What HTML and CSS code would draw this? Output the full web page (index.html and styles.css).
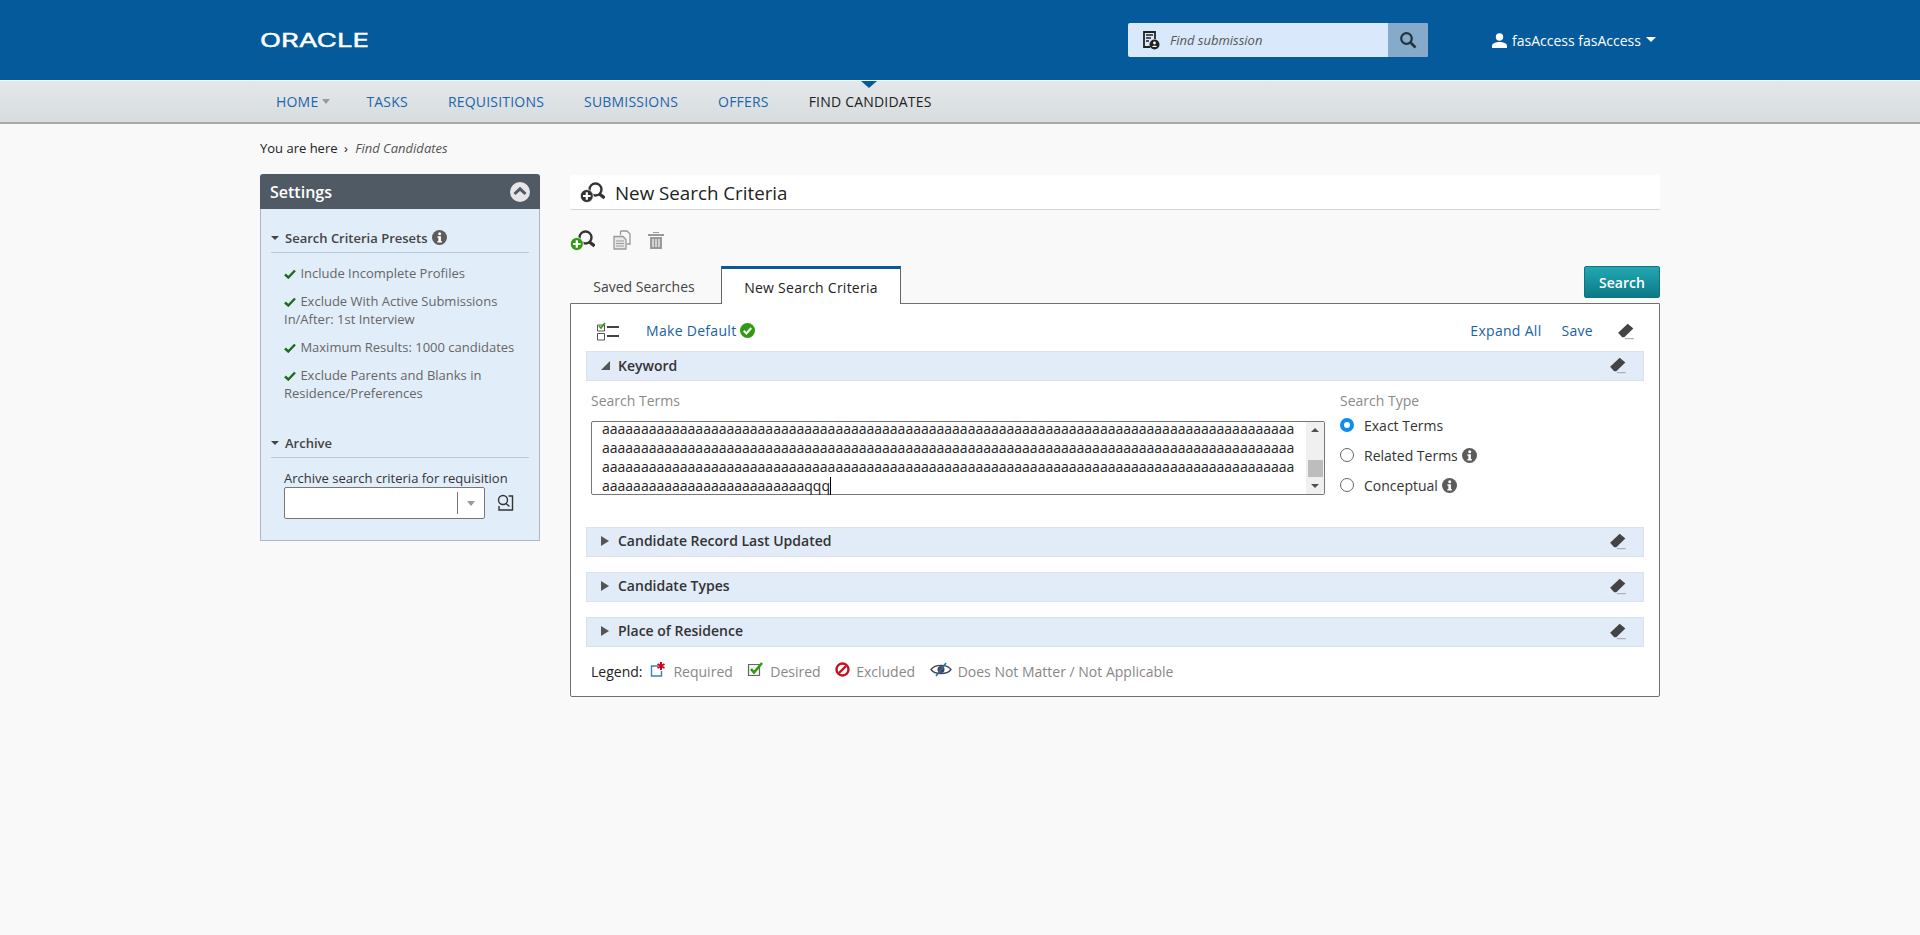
FILE: index.html
```html
<!DOCTYPE html>
<html lang="en">
<head>
    <meta charset="UTF-8">
    <meta name="viewport" content="width=device-width, initial-scale=1.0">
    <title>Find Candidates</title>
    <link rel="stylesheet" href="styles.css">
</head>
<body>
    <svg class="defs" width="0" height="0">
        <defs>
            <symbol id="eraser" viewBox="0 0 16 16">
                <path d="M1 9.500 9.500 1.500l5 4.200L6.500 13.500H4.600z" fill="#444"/>
                <path d="M7 14.800h8" stroke="#aaa" stroke-width="1"/>
            </symbol>
            <symbol id="info" viewBox="0 0 16 16">
                <circle cx="8" cy="8" r="8" fill="#5c5c5c"/>
                <circle cx="8.200" cy="3.900" r="1.600" fill="#fff"/>
                <path d="M5.800 6.700h3.700v5.100h1v1.500H5.800v-1.500h1v-3.600h-1z" fill="#fff"/>
            </symbol>
            <symbol id="check" viewBox="0 0 12 10">
                <path d="M1 5.500 4.300 8.500 11 1.500" fill="none" stroke="#1d6b1d" stroke-width="2.400"/>
            </symbol>
        </defs>
    </svg>

    <header class="topbar">
        <div class="wrap topbar-inner">
            <svg class="logo" width="110" height="28" viewBox="0 0 110 28">
                <text x="0" y="21" textLength="109" lengthAdjust="spacingAndGlyphs" font-family="Inter" font-size="18" fill="#fff" stroke="#fff" stroke-width="0.400">ORACLE</text>
            </svg>
            <div class="find-box">
                <svg class="find-icon" width="18" height="20" viewBox="0 0 18 20">
                    <path d="M8 17H2V2h11v7" fill="none" stroke="#222" stroke-width="1.800"/>
                    <path d="M4 5h7M4 8h5M4 11h3" stroke="#222" stroke-width="1.500"/>
                    <circle cx="12.500" cy="14.500" r="5" fill="#222"/>
                    <circle cx="12.500" cy="13" r="1.400" fill="#fff"/>
                    <path d="M10 17c.5-1.800 4.500-1.800 5 0z" fill="#fff"/>
                </svg>
                <span class="find-text">Find submission</span>
                <span class="find-btn">
                    <svg width="18" height="18" viewBox="0 0 18 18">
                        <circle cx="7.500" cy="7.500" r="5.300" fill="none" stroke="#24323e" stroke-width="2.200"/>
                        <path d="M11.500 11.500l5 5" stroke="#24323e" stroke-width="2.600"/>
                    </svg>
                </span>
            </div>
            <div class="user">
                <svg width="15" height="15" viewBox="0 0 15 15">
                    <circle cx="7.500" cy="4" r="3.700" fill="#fff"/>
                    <path d="M0 15v-2c0-3 4-4 7.500-4s7.500 1 7.500 4v2z" fill="#fff"/>
                </svg>
                <span>fasAccess fasAccess</span>
                <i class="caret-white"></i>
            </div>
        </div>
    </header>

    <nav class="navbar">
        <div class="wrap nav-inner">
            <a class="nav-link">HOME<i class="caret-gray"></i></a>
            <a class="nav-link">TASKS</a>
            <a class="nav-link">REQUISITIONS</a>
            <a class="nav-link">SUBMISSIONS</a>
            <a class="nav-link">OFFERS</a>
            <a class="nav-link current">FIND CANDIDATES</a>
        </div>
    </nav>

    <div class="wrap">
        <div class="crumbs">You are here <span class="crumb-sep">›</span> <em>Find Candidates</em></div>

        <div class="columns">
            <aside class="sidebar">
                <div class="side-head">
                    <span>Settings</span>
                    <svg width="20" height="20" viewBox="0 0 20 20">
                        <circle cx="10" cy="10" r="10" fill="#e6e6e6"/>
                        <path d="M4.500 12 10 6.800 15.500 12" fill="none" stroke="#4f5a65" stroke-width="3"/>
                    </svg>
                </div>
                <div class="side-body">
                    <div class="side-title"><i class="caret-small"></i>Search Criteria Presets <svg class="info" width="15" height="15"><use href="#info"/></svg></div>
                    <ul class="presets">
                        <li><svg class="tick" width="12" height="10"><use href="#check"/></svg> Include Incomplete Profiles</li>
                        <li><svg class="tick" width="12" height="10"><use href="#check"/></svg> Exclude With Active Submissions In/After: 1st Interview</li>
                        <li><svg class="tick" width="12" height="10"><use href="#check"/></svg> Maximum Results: 1000 candidates</li>
                        <li><svg class="tick" width="12" height="10"><use href="#check"/></svg> Exclude Parents and Blanks in Residence/Preferences</li>
                    </ul>
                    <div class="side-title archive-title"><i class="caret-small"></i>Archive</div>
                    <div class="archive-label">Archive search criteria for requisition</div>
                    <div class="archive-row">
                        <div class="combo"><span class="combo-arrow"><i class="caret-gray"></i></span></div>
                        <svg width="18" height="18" viewBox="0 0 18 18">
                            <circle cx="7" cy="6" r="4.500" fill="none" stroke="#333" stroke-width="1.400"/>
                            <path d="M10 9.500l3.500 3M12.500 2H16.500V16H3V12" fill="none" stroke="#333" stroke-width="1.400"/>
                        </svg>
                    </div>
                </div>
            </aside>

            <main class="content">
                <div class="title-bar">
                    <svg width="25" height="21" viewBox="0 0 25 21">
                        <circle cx="15.500" cy="7.500" r="6" fill="none" stroke="#333" stroke-width="2.400"/>
                        <path d="M19.500 12l5 4" stroke="#333" stroke-width="3.400"/>
                        <circle cx="6.800" cy="14" r="6.500" fill="#333" stroke="#fff" stroke-width="0.800"/>
                        <path d="M3 14h7.600M6.800 10.200v7.600" stroke="#fff" stroke-width="2.200"/>
                    </svg>
                    <h1>New Search Criteria</h1>
                </div>

                <div class="tools">
                    <svg width="25" height="21" viewBox="0 0 25 21">
                        <circle cx="15.500" cy="7.500" r="6" fill="none" stroke="#333" stroke-width="2.400"/>
                        <path d="M19.500 12l5 4" stroke="#333" stroke-width="3.400"/>
                        <circle cx="6.800" cy="14" r="6.500" fill="#2f9a12" stroke="#fff" stroke-width="0.800"/>
                        <path d="M3 14h7.600M6.800 10.200v7.600" stroke="#fff" stroke-width="2.200"/>
                    </svg>
                    <svg class="tool-copy" width="18" height="20" viewBox="0 0 18 20">
                        <path d="M7.500 1H14l3 3v10h-3M7.500 1v4" fill="none" stroke="#999" stroke-width="1.300"/>
                        <path d="M1 6.500h9l3 3v9.500H1z" fill="#e8e8e8" stroke="#999" stroke-width="1.300"/>
                        <path d="M3 11h8M3 13.500h8M3 16h8" stroke="#999" stroke-width="1.200"/>
                    </svg>
                    <svg class="tool-trash" width="16" height="18" viewBox="0 0 16 18">
                        <path d="M5 2V1h6v1M0 3h16v2H0zM2 6h12v12H2z" fill="#999"/>
                        <path d="M5 8v8M8 8v8M11 8v8" stroke="#e8e8e8" stroke-width="1.400"/>
                    </svg>
                </div>

                <div class="tab-row">
                    <a class="tab">Saved Searches</a>
                    <a class="tab active">New Search Criteria</a>
                    <a class="search-btn">Search</a>
                </div>

                <section class="panel">
                    <div class="panel-top">
                        <svg class="list-icon" width="24" height="20" viewBox="0 0 24 20">
                            <path d="M1.500 4h7v6h-7zM1.500 12.500h7v6.500h-7z" fill="none" stroke="#555"/>
                            <path d="M3 5l2 2 4-5" fill="none" stroke="#2f9a12" stroke-width="1.600"/>
                            <path d="M11 6h12M11 15h12" stroke="#444" stroke-width="2"/>
                        </svg>
                        <a class="link">Make Default</a>
                        <svg class="ok-icon" width="15" height="15" viewBox="0 0 14 14">
                            <circle cx="7" cy="7" r="7" fill="#2f9a12"/>
                            <path d="M3.500 7.200 6 9.700l4.500-5" fill="none" stroke="#fff" stroke-width="2"/>
                        </svg>
                        <span class="spacer"></span>
                        <a class="link">Expand All</a>
                        <a class="link save-link">Save</a>
                        <svg class="top-eraser" width="18" height="18"><use href="#eraser"/></svg>
                    </div>

                    <div class="section-head"><i class="tri-open"></i><span>Keyword</span><svg width="18" height="18"><use href="#eraser"/></svg></div>
                    <div class="keyword">
                        <div class="terms">
                            <div class="field-label">Search Terms</div>
                            <div class="textbox">
                                <div class="textbox-text">
                                    <div>aaaaaaaaaaaaaaaaaaaaaaaaaaaaaaaaaaaaaaaaaaaaaaaaaaaaaaaaaaaaaaaaaaaaaaaaaaaaaaaaaaaaaaaaa</div>
                                    <div>aaaaaaaaaaaaaaaaaaaaaaaaaaaaaaaaaaaaaaaaaaaaaaaaaaaaaaaaaaaaaaaaaaaaaaaaaaaaaaaaaaaaaaaaa</div>
                                    <div>aaaaaaaaaaaaaaaaaaaaaaaaaaaaaaaaaaaaaaaaaaaaaaaaaaaaaaaaaaaaaaaaaaaaaaaaaaaaaaaaaaaaaaaaa</div>
                                    <div>aaaaaaaaaaaaaaaaaaaaaaaaaaqqq<span class="cursor"></span></div>
                                </div>
                                <div class="scroll">
                                    <i class="scroll-up"></i>
                                    <i class="scroll-thumb"></i>
                                    <i class="scroll-down"></i>
                                </div>
                            </div>
                        </div>
                        <div class="types">
                            <div class="field-label">Search Type</div>
                            <label class="radio-row"><i class="radio on"></i>Exact Terms</label>
                            <label class="radio-row"><i class="radio"></i>Related Terms <svg class="info" width="15" height="15"><use href="#info"/></svg></label>
                            <label class="radio-row"><i class="radio"></i>Conceptual <svg class="info" width="15" height="15"><use href="#info"/></svg></label>
                        </div>
                    </div>

                    <div class="section-head"><i class="tri-closed"></i><span>Candidate Record Last Updated</span><svg width="18" height="18"><use href="#eraser"/></svg></div>
                    <div class="section-head"><i class="tri-closed"></i><span>Candidate Types</span><svg width="18" height="18"><use href="#eraser"/></svg></div>
                    <div class="section-head"><i class="tri-closed"></i><span>Place of Residence</span><svg width="18" height="18"><use href="#eraser"/></svg></div>

                    <div class="legend">
                        <span class="legend-title">Legend:</span>
                        <span class="legend-item">
                            <svg width="17" height="17" viewBox="0 0 17 17">
                                <path d="M8 5H1.500v10h10V10" fill="none" stroke="#3a7fc0" stroke-width="1.400"/>
                                <path d="M11 1v8M7.500 3l7 4M14.500 3l-7 4" stroke="#d0021b" stroke-width="2"/>
                            </svg>
                            Required
                        </span>
                        <span class="legend-item">
                            <svg width="17" height="17" viewBox="0 0 17 17">
                                <path d="M1.500 3.500h11v11h-11z" fill="#f3f3f3" stroke="#666" stroke-width="1.200"/>
                                <path d="M4 8l3 3.500L15 2" fill="none" stroke="#2f9a12" stroke-width="2.600"/>
                            </svg>
                            Desired
                        </span>
                        <span class="legend-item">
                            <svg width="15" height="15" viewBox="0 0 15 15">
                                <circle cx="7.500" cy="7.500" r="6" fill="none" stroke="#c8101c" stroke-width="2.400"/>
                                <path d="M4 11 11 4" stroke="#c8101c" stroke-width="2.400"/>
                            </svg>
                            Excluded
                        </span>
                        <span class="legend-item">
                            <svg width="22" height="15" viewBox="0 0 22 15">
                                <path d="M1 7.500C5 2 17 2 21 7.500 17 13 5 13 1 7.500z" fill="none" stroke="#445" stroke-width="1.300"/>
                                <circle cx="11" cy="7.500" r="3.500" fill="#445"/>
                                <path d="M16 1 6 14" stroke="#2a6fb5" stroke-width="1.600"/>
                            </svg>
                            Does Not Matter / Not Applicable
                        </span>
                    </div>
                </section>
            </main>
        </div>
    </div>
</body>
</html>
```

FILE: styles.css
```css
* {
    box-sizing: border-box;
}
body {
    margin: 0;
    background: #f9f9f9;
    font-family: "Open Sans", Arial, sans-serif;
    font-size: 14px;
    color: #222;
}
svg {
    flex: none;
}
.defs {
    position: absolute;
}
.wrap {
    width: 1400px;
    margin: 0 auto;
}

/* header */
.topbar {
    height: 81px;
    background: #045a9b;
    border-bottom: 1px solid #f2f4f5;
}
.topbar-inner {
    display: flex;
    align-items: center;
    height: 80px;
}
.find-box {
    display: flex;
    align-items: center;
    width: 300px;
    height: 34px;
    margin-left: 758px;
    background: #d9e9fb;
    border-radius: 2px;
    overflow: hidden;
}
.find-icon {
    margin-left: 14px;
}
.find-text {
    flex: 1;
    margin-left: 10px;
    font-size: 13px;
    font-style: italic;
    color: #555;
}
.find-btn {
    display: flex;
    align-items: center;
    justify-content: center;
    width: 40px;
    height: 34px;
    background: #86abca;
}
.user {
    display: flex;
    align-items: center;
    margin-left: 64px;
    color: #fff;
    white-space: nowrap;
}
.user span {
    margin-left: 5px;
}
.caret-white {
    margin-left: 5px;
    margin-bottom: 2px;
    border-left: 5px solid transparent;
    border-right: 5px solid transparent;
    border-top: 5px solid #fff;
}

/* nav */
.navbar {
    height: 43px;
    background: linear-gradient(#e4e8eb, #d7dcdf);
    border-bottom: 2px solid #a9a9a9;
}
.nav-inner {
    display: flex;
    align-items: center;
    height: 41px;
    padding-left: 16px;
    gap: 40px;
}
.nav-link {
    position: relative;
    color: #1a66ab;
    white-space: nowrap;
    letter-spacing: 0.2px;
}
.nav-link .caret-gray {
    display: inline-block;
    margin-left: 4px;
    margin-right: -4px;
    vertical-align: 3px;
}
.caret-gray {
    border-left: 4px solid transparent;
    border-right: 4px solid transparent;
    border-top: 5px solid #999;
}
.nav-link.current {
    color: #222;
}
.nav-link.current::before {
    content: "";
    position: absolute;
    left: 50%;
    top: -11px;
    margin-left: -9px;
    border-left: 8px solid transparent;
    border-right: 8px solid transparent;
    border-top: 7px solid #045a9b;
}

.crumbs {
    height: 50px;
    padding-top: 15px;
    font-size: 13px;
    color: #222;
}
.crumbs em {
    color: #555;
}
.crumb-sep {
    margin: 0 4px 0 3px;
}
.columns {
    display: flex;
    align-items: flex-start;
    gap: 30px;
}

/* settings */
.sidebar {
    width: 280px;
    background: #e2edfa;
    border-radius: 3px 3px 0 0;
}
.side-head {
    display: flex;
    align-items: center;
    justify-content: space-between;
    height: 35px;
    padding: 0 10px;
    background: #4f5a65;
    border-radius: 3px 3px 0 0;
    color: #fff;
    font-size: 16px;
    font-weight: 600;
}
.side-body {
    height: 332px;
    padding: 19px 10px 0;
    border: 1px solid #a9b9c9;
    border-top: 0;
}
.side-title {
    display: flex;
    align-items: center;
    height: 25px;
    padding-bottom: 5px;
    border-bottom: 1px solid #b9c8d6;
    font-size: 13px;
    font-weight: 600;
    color: #444;
}
.side-title .info {
    margin-left: 4px;
}
.caret-small {
    margin-right: 6px;
    border-left: 4px solid transparent;
    border-right: 4px solid transparent;
    border-top: 4px solid #444;
}
.presets {
    list-style: none;
    margin: 0;
    padding: 11px 0 0 13px;
    font-size: 13px;
    line-height: 18px;
    color: #666;
}
.presets li {
    margin-bottom: 10px;
}
.tick {
    margin-right: 1px;
    vertical-align: -1px;
}
.archive-title {
    margin-top: 31px;
    padding-bottom: 4px;
}
.archive-label {
    margin: 11px 0 0 13px;
    font-size: 13px;
    line-height: 18px;
    color: #333;
}
.archive-row {
    display: flex;
    align-items: center;
    margin-left: 13px;
    gap: 11px;
}
.combo {
    display: flex;
    justify-content: flex-end;
    width: 201px;
    height: 32px;
    padding: 4px 0;
    background: #fff;
    border: 1px solid #777;
    border-radius: 2px;
}
.combo-arrow {
    display: flex;
    align-items: center;
    justify-content: center;
    width: 27px;
    border-left: 1px solid #777;
}

/* main */
.content {
    width: 1090px;
}
.title-bar {
    display: flex;
    align-items: center;
    height: 35px;
    margin-top: 1px;
    padding-left: 10px;
    background: #fff;
    border-bottom: 1px solid #d4d4d4;
    border-radius: 2px;
    gap: 10px;
}
.title-bar h1 {
    margin: 0;
    font-size: 18.75px;
    font-weight: 400;
    color: #222;
}
.tools {
    display: flex;
    align-items: center;
    height: 56px;
    padding-top: 4px;
}
.tool-copy {
    margin-left: 18px;
}
.tool-trash {
    margin-left: 17px;
}
.tab-row {
    display: flex;
    align-items: flex-end;
    height: 37px;
}
.tab {
    display: flex;
    align-items: center;
    justify-content: center;
    width: 151px;
    height: 34px;
    padding-right: 3px;
    color: #444;
    font-size: 14px;
}
.tab.active {
    position: relative;
    z-index: 1;
    width: 180px;
    height: 38px;
    margin-bottom: -1px;
    padding: 2px 0 0;
    background: #fff;
    border: 1px solid #666;
    border-top: 3px solid #045a9b;
    border-bottom: 0;
    color: #222;
    font-weight: 500;
    letter-spacing: 0.25px;
}
.search-btn {
    display: flex;
    align-items: center;
    justify-content: center;
    align-self: flex-start;
    width: 76px;
    height: 32px;
    margin-left: auto;
    background: linear-gradient(#22a8b3, #0b7a86);
    border: 1px solid #0d7480;
    border-radius: 2px;
    color: #fff;
    font-weight: 600;
}
.panel {
    height: 394px;
    padding: 0 15px;
    background: #fff;
    border: 1px solid #707070;
    border-radius: 0 0 2px 2px;
}
.panel-top {
    display: flex;
    align-items: center;
    height: 47px;
    padding-top: 6px;
}
.list-icon {
    margin-left: 10px;
}
.panel-top .link:first-of-type {
    margin-left: 26px;
}
.link {
    color: #1a5fa3;
    font-weight: 500;
    letter-spacing: 0.3px;
}
.ok-icon {
    margin-left: 4px;
}
.spacer {
    flex: 1;
}
.save-link {
    margin-left: 20px;
}
.top-eraser {
    margin: 0 9px 0 24px;
}
.section-head {
    display: flex;
    align-items: center;
    height: 30px;
    padding: 0 16px 2px 14px;
    margin-bottom: 15px;
    background: #e2ebf8;
    border: 1px solid #dbe2ea;
    font-weight: 600;
    font-size: 14px;
    color: #333;
}
.section-head span {
    flex: 1;
    margin-left: 8px;
}
.tri-closed {
    border-top: 5.500px solid transparent;
    border-bottom: 5.500px solid transparent;
    border-left: 8px solid #555;
}
.section-head .tri-closed + span {
    margin: 0 0 2px 9px;
}
.tri-open {
    border-bottom: 9px solid #555;
    border-left: 9px solid transparent;
}
.keyword {
    display: flex;
    height: 131px;
    margin-top: -15px;
    padding-left: 4px;
    margin-bottom: 15px;
}
.terms {
    width: 735px;
}
.terms .field-label {
    padding-left: 1px;
}
.field-label {
    height: 40px;
    padding-top: 10px;
    color: #8a8a8a;
    font-size: 14px;
    line-height: 20px;
}
.textbox {
    display: flex;
    height: 74px;
    margin-left: 1px;
    background: #fff;
    border: 1px solid #777;
    border-radius: 2px;
}
.textbox-text {
    flex: 1;
    height: 72px;
    padding-left: 10px;
    font-size: 14px;
    line-height: 19px;
    white-space: nowrap;
    color: #222;
}
.textbox-text div:first-child {
    line-height: 13px;
    margin-bottom: 3px;
}
.cursor {
    display: inline-block;
    width: 1px;
    height: 18px;
    vertical-align: -4px;
    background: #000;
}
.scroll {
    position: relative;
    flex: none;
    width: 18px;
    background: #f0f0f0;
}
.scroll-up,
.scroll-down {
    position: absolute;
    left: 5px;
    border-left: 4px solid transparent;
    border-right: 4px solid transparent;
}
.scroll-up {
    top: 6px;
    border-bottom: 4px solid #505050;
}
.scroll-down {
    bottom: 6px;
    border-top: 4px solid #505050;
}
.scroll-thumb {
    position: absolute;
    left: 2px;
    right: 1px;
    top: 38px;
    height: 17px;
    background: #bdbdbd;
}
.types {
    margin-left: 15px;
}
.types .field-label {
    height: 29px;
}
.radio-row {
    display: flex;
    align-items: center;
    height: 30px;
    color: #333;
}
.radio-row .info {
    margin-left: 4px;
}
.radio {
    width: 14px;
    height: 14px;
    margin-right: 10px;
    border: 1px solid #666;
    border-radius: 50%;
    background: #fff;
}
.radio.on {
    border: 4px solid #0a8ff0;
}
.legend {
    display: flex;
    align-items: center;
    height: 30px;
    margin-top: -6px;
    padding-left: 5px;
    color: #888;
}
.legend-title {
    color: #222;
    margin-right: 8px;
}
.legend-item {
    display: flex;
    align-items: center;
    gap: 6px;
    margin-right: 14.500px;
}
.legend-item svg {
    margin-bottom: 4px;
}
```
